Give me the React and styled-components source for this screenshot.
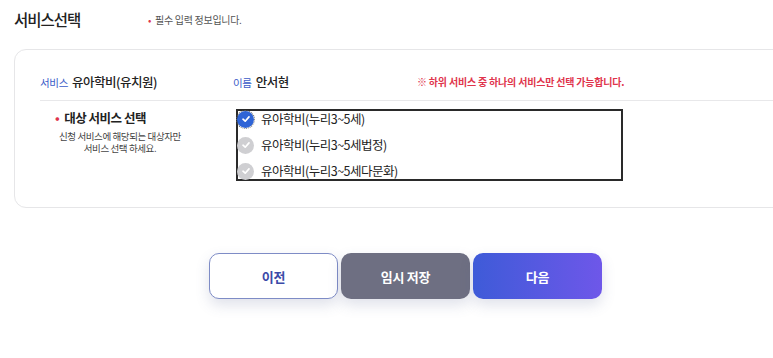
import React from "react";
import styled, { createGlobalStyle } from "styled-components";

const Global = createGlobalStyle`
  html, body { margin: 0; padding: 0; background: #fff; }
  body { font-family: "Noto Sans CJK KR", "Noto Sans", sans-serif; color: #222; overflow: hidden; }
  * { box-sizing: border-box; }
`;

const Page = styled.div`
  width: 773px;
  height: 358px;
  overflow: hidden;
  padding: 8px 0 0 14px;
`;

const Header = styled.div`
  display: flex;
  align-items: center;
  height: 22px;
`;

const Title = styled.h2`
  margin: 0;
  width: 134px;
  font-size: 15.5px;
  font-weight: 500;
  letter-spacing: -1px;
  color: #222;
`;

const Note = styled.span`
  font-size: 10px;
  letter-spacing: -0.3px;
  color: #555;
  &::before {
    content: "•";
    color: #e0344c;
    margin-right: 4px;
  }
`;

const Card = styled.section`
  margin-top: 19px;
  width: 800px;
  border: 1px solid #e6e6e8;
  border-radius: 12px;
  padding: 0 0 26px 25px;
`;

const InfoRow = styled.div`
  display: flex;
  align-items: center;
  height: 51px;
  padding-top: 12px;
  border-bottom: 1px solid #e8e8ea;
`;

const InfoItem = styled.div`
  width: ${(p) => p.$w}px;
  display: flex;
  align-items: baseline;
  gap: 4px;
`;

const InfoLabel = styled.span`
  font-size: 10.5px;
  color: #3b5bc8;
  letter-spacing: -0.3px;
`;

const InfoValue = styled.span`
  font-size: 12.5px;
  font-weight: 500;
  letter-spacing: -0.5px;
  color: #222;
`;

const Warn = styled.span`
  font-size: 10px;
  font-weight: 700;
  letter-spacing: -0.2px;
  color: #e0344c;
`;

const SelectRow = styled.div`
  display: flex;
  padding-top: 8px;
`;

const SideCol = styled.div`
  width: 196px;
  padding-left: 15px;
  padding-top: 1px;
`;

const Required = styled.div`
  font-size: 12.5px;
  font-weight: 700;
  letter-spacing: -0.5px;
  color: #222;
  line-height: 16px;
  &::before {
    content: "•";
    color: #e0344c;
    margin-right: 5px;
  }
`;

const Help = styled.p`
  margin: 4px 0 0;
  width: 130px;
  text-align: center;
  font-size: 9.5px;
  letter-spacing: -0.4px;
  line-height: 12px;
  color: #444;
`;

const List = styled.div`
  width: 387px;
  height: 72px;
  border: 2px solid #2a2a2a;
  display: flex;
  flex-direction: column;
  gap: 10px;
`;

const Option = styled.label`
  display: flex;
  align-items: center;
  gap: 7px;
  height: 16px;
  line-height: 16px;
  margin-left: -1px;
  font-size: 12.5px;
  letter-spacing: -0.5px;
  color: #222;
`;

const Check = styled.span`
  width: 17px;
  height: 17px;
  flex: none;
  display: inline-flex;
  align-items: center;
  justify-content: center;
  border-radius: 50%;
  background: ${(p) => (p.$on ? "#2f64d6" : "#cfcfd2")};
  outline: ${(p) => (p.$on ? "1px dotted #666" : "none")};
`;

const Actions = styled.div`
  display: flex;
  justify-content: center;
  gap: 3px;
  margin-top: 45px;
  padding-left: 24px;
`;

const Button = styled.button`
  width: 129px;
  height: 46px;
  border-radius: 10px;
  font-family: inherit;
  font-size: 13px;
  font-weight: 700;
  letter-spacing: -0.3px;
  cursor: pointer;
  box-shadow: 0 6px 14px rgba(80, 90, 140, 0.18);
  border: ${(p) => (p.$variant === "outline" ? "1px solid #7e8cc6" : "none")};
  color: ${(p) => (p.$variant === "outline" ? "#3b4aa8" : "#fff")};
  background: ${(p) =>
    p.$variant === "outline"
      ? "#fff"
      : p.$variant === "gray"
      ? "#6e6f82"
      : "linear-gradient(90deg, #3e5bd8 0%, #6e57e9 100%)"};
`;

const CheckIcon = () => (
  <svg width="10" height="10" viewBox="0 0 10 10">
    <path d="M2 5.2 L4.2 7.2 L8 2.9" fill="none" stroke="#fff" strokeWidth="1.7" strokeLinecap="round" strokeLinejoin="round" />
  </svg>
);

const options = [
  { label: "유아학비(누리3~5세)", on: true },
  { label: "유아학비(누리3~5세법정)", on: false },
  { label: "유아학비(누리3~5세다문화)", on: false },
];

export default function App() {
  return (
    <Page>
      <Global />
      <Header>
        <Title>서비스선택</Title>
        <Note>필수 입력 정보입니다.</Note>
      </Header>
      <Card>
        <InfoRow>
          <InfoItem $w={193}>
            <InfoLabel>서비스</InfoLabel>
            <InfoValue>유아학비(유치원)</InfoValue>
          </InfoItem>
          <InfoItem $w={184}>
            <InfoLabel>이름</InfoLabel>
            <InfoValue>안서현</InfoValue>
          </InfoItem>
          <Warn>※ 하위 서비스 중 하나의 서비스만 선택 가능합니다.</Warn>
        </InfoRow>
        <SelectRow>
          <SideCol>
            <Required>대상 서비스 선택</Required>
            <Help>
              신청 서비스에 해당되는 대상자만
              <br />
              서비스 선택 하세요.
            </Help>
          </SideCol>
          <List>
            {options.map((o) => (
              <Option key={o.label}>
                <Check $on={o.on}>
                  <CheckIcon />
                </Check>
                {o.label}
              </Option>
            ))}
          </List>
        </SelectRow>
      </Card>
      <Actions>
        <Button $variant="outline">이전</Button>
        <Button $variant="gray">임시 저장</Button>
        <Button $variant="primary">다음</Button>
      </Actions>
    </Page>
  );
}
